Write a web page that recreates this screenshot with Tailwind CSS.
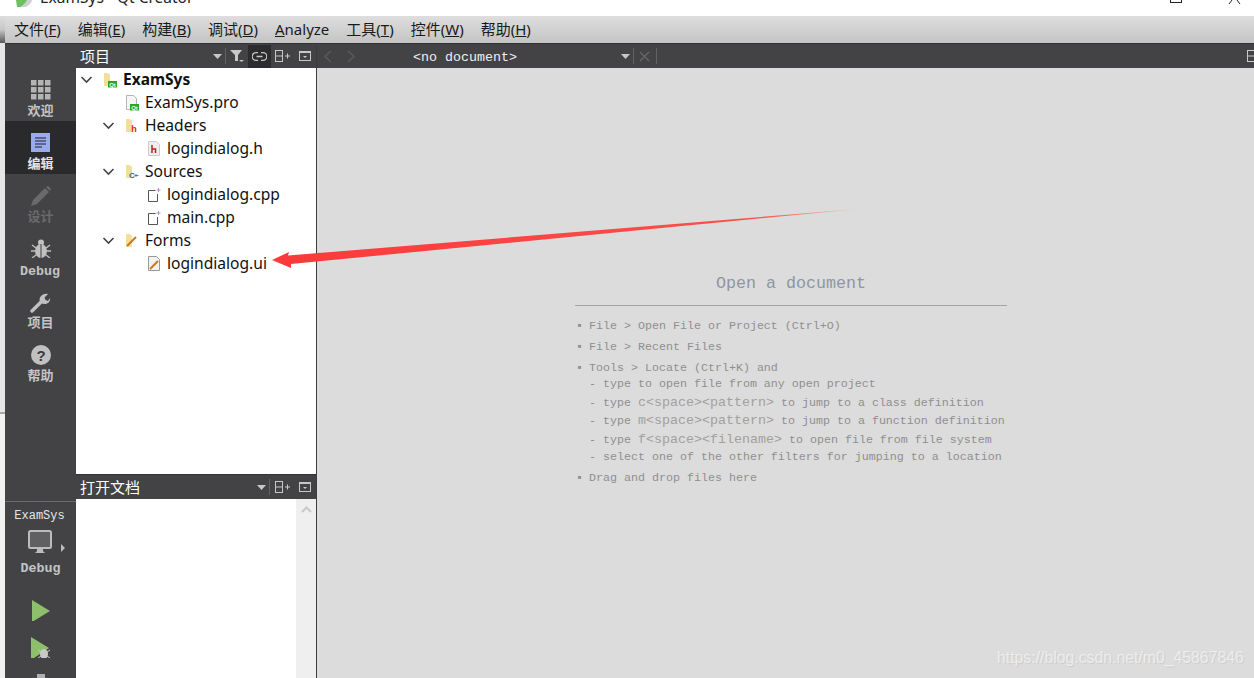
<!doctype html>
<html><head><meta charset="utf-8"><script src="https://cdn.jsdelivr.net/npm/@tailwindcss/browser@4"></script></head>
<body class="m-0 bg-white">
<div class="relative w-[1254px] h-[678px] overflow-hidden flex flex-col font-['Noto_Sans','Noto_Sans_CJK_SC',sans-serif] bg-[#dcdcdc]">

<!-- title bar -->
<div class="h-4 bg-white relative overflow-hidden shrink-0">
  <div class="absolute left-[40px] top-[-13px] text-[15.5px] leading-[20px] text-[#222] whitespace-pre">ExamSys - Qt Creator</div>
  <svg class="absolute left-[15px] top-0" width="18" height="8"><path d="M1 0h11v2L6 7H2z" fill="#6fbf5e"/><path d="M12 0h5l-1 3-5 4-4 0z" fill="#cfcfcf"/></svg>
  <div class="absolute left-[1170px] top-[-8px] w-3 h-[11px] border border-[#222]"></div>
  <svg class="absolute left-[1228px] top-0" width="14" height="5"><path d="M1 4L4 0M12 4L9 0" stroke="#222"/></svg>
</div>

<!-- menu -->
<div class="h-[27px] shrink-0 flex">
  <div class="w-[5px] bg-gradient-to-b from-[#dcdcdc] via-[#c8c8c8] to-[#5a5a5a]"></div>
  <div class="flex-1 bg-gradient-to-b from-[#dedede] to-[#c4c4c4] flex items-center pl-[9px] gap-[17px] text-[15px] text-[#1a1a1a] leading-none">
    <span>文件(<u>F</u>)</span><span>编辑(<u>E</u>)</span><span>构建(<u>B</u>)</span><span>调试(<u>D</u>)</span><span><u>A</u>nalyze</span><span>工具(<u>T</u>)</span><span>控件(<u>W</u>)</span><span>帮助(<u>H</u>)</span>
  </div>
</div>

<div class="flex-1 flex min-h-0">
  <!-- left edge -->
  <div class="w-[5px] shrink-0 flex flex-col">
    <div class="h-[369px] bg-[#e6e6e6]"></div>
    <div class="h-[2px] bg-[#a8a8a8]"></div>
    <div class="flex-1 bg-[#f1f1f1]"></div>
  </div>

  <!-- mode bar -->
  <div class="w-[71px] shrink-0 flex flex-col bg-[#434345]">
    <div class="h-[25px] bg-[#434345] border-t border-[#333]"></div>
    <div class="flex flex-col text-[13px] font-bold text-[#c4c4c4] leading-none">
      <div class="h-[53px] flex flex-col items-center pt-[12px]">
        <svg width="20" height="20" fill="#b4b4b4"><rect width="5.500" height="5.500"/><rect x="7" width="5.500" height="5.500"/><rect x="14" width="5.500" height="5.500"/><rect y="7" width="5.500" height="5.500"/><rect x="7" y="7" width="5.500" height="5.500"/><rect x="14" y="7" width="5.500" height="5.500"/><rect y="14" width="5.500" height="5.500"/><rect x="7" y="14" width="5.500" height="5.500"/><rect x="14" y="14" width="5.500" height="5.500"/></svg>
        <span class="mt-[4px]">欢迎</span>
      </div>
      <div class="h-[53px] flex flex-col items-center pt-[12px] bg-[#2a2a2c] text-[#e4e4e4]">
        <svg width="19" height="19"><rect width="19" height="19" fill="#9aaaee"/><path d="M4 5h11M4 8h11M4 11h11M4 14h7" stroke="#222" stroke-width="1.200"/></svg>
        <span class="mt-[5px]">编辑</span>
      </div>
      <div class="h-[53px] flex flex-col items-center pt-[12px] text-[#6a6a6c]">
        <svg width="20" height="20" fill="#6a6a6c"><path d="M0 20l2-6L14 2l4 4L6 18z"/><path d="M15 1l2-1 3 3-1 2z"/></svg>
        <span class="mt-[4px]">设计</span>
      </div>
      <div class="h-[53px] flex flex-col items-center pt-[12px]">
        <svg width="20" height="19" fill="#c0c0c0"><ellipse cx="10" cy="12" rx="6" ry="7"/><circle cx="10" cy="3.500" r="3"/><path d="M1 6l4 3M19 6l-4 3M0 12h4M20 12h-4M1 19l4-3M19 19l-4-3" stroke="#c0c0c0" stroke-width="1.300"/><path d="M10 5v14" stroke="#434345"/></svg>
        <span class="mt-[7px] text-[13.33px] font-['Liberation_Mono',monospace] mr-[1px]">Debug</span>
      </div>
      <div class="h-[53px] flex flex-col items-center pt-[13px]">
        <svg width="21" height="20" fill="none"><path d="M2 18L11 9" stroke="#c0c0c0" stroke-width="3.400" stroke-linecap="round"/><path d="M10 9C8 3 14 0 18 1l-3.500 3.500 1 2.500 2.500 1L20 5c1 4-4 8-9 5z" fill="#c0c0c0"/></svg>
        <span class="mt-[3px]">项目</span>
      </div>
      <div class="h-[53px] flex flex-col items-center pt-[12px]">
        <svg width="20" height="20"><circle cx="10" cy="10" r="10" fill="#c0c0c0"/><text x="10" y="15.500" text-anchor="middle" font-size="15" font-weight="700" fill="#3a3a3c" font-family="Liberation Sans">?</text></svg>
        <span class="mt-[4px]">帮助</span>
      </div>
    </div>
    <div class="flex-1"></div>
    <div class="h-[177px] border-t border-[#6a6a6a] flex flex-col items-center shrink-0 relative overflow-hidden">
      <span class="mt-[8px] text-[12px] leading-[13px] text-[#e6e6e6] font-['Liberation_Mono',monospace] mr-[2px]">ExamSys</span>
      <svg class="mt-[7px] mr-[1px]" width="26" height="25"><rect x="2" y="1" width="22" height="17" rx="1.500" fill="#606062" stroke="#bcbcbc" stroke-width="2"/><path d="M10.500 18h5l1 4 4 2H5.500l4-2z" fill="#bcbcbc"/></svg>
      <svg class="absolute left-[56px] top-[42px]" width="5" height="8"><path d="M0 0l4 4-4 4z" fill="#bcbcbc"/></svg>
      <span class="mt-[9px] text-[13.33px] font-bold leading-[14px] text-[#c4c4c4] font-['Liberation_Mono',monospace]">Debug</span>
      <svg class="mt-[24px]" width="18" height="22"><path d="M0 0l18 11L0 22z" fill="#8dbf6c"/></svg>
      <svg class="mt-[16px]" width="20" height="23"><path d="M0 0l18 11L0 23z" fill="#8dbf6c"/><ellipse cx="13" cy="17" rx="4" ry="5" fill="#c8c8c8"/><path d="M7 13l3 2M19 13l-3 2M7 21l3-2M19 21l-3-2" stroke="#c8c8c8"/></svg>
      <div class="mt-[16px] w-2 h-1 bg-[#b0b0b0]"></div>
    </div>
  </div>

  <!-- side panel -->
  <div class="w-[241px] shrink-0 flex flex-col border-r border-[#3c3c3e]">
    <div class="h-[25px] bg-[#434345] border-t border-[#333] flex items-center pl-[4px] text-[15px] text-white shrink-0 relative">
      <span>项目</span>
      <svg class="ml-auto mr-[3px]" width="9" height="5"><path d="M0 0h9L4.500 5z" fill="#c8c8c8"/></svg>
      <div class="w-px h-[16px] bg-[#626264]"></div>
      <svg class="ml-[4px]" width="14" height="12"><path d="M0 0h12L8 5v6H5V5z" fill="#c8c8c8"/><path d="M9 10h5l-2.500 2z" fill="#c8c8c8"/></svg>
      <div class="ml-[4px] w-[23px] h-[23px] bg-[#2c2c2e] flex items-center justify-center"><svg width="15" height="9" fill="none" stroke="#c4c4c4" stroke-width="1.300"><path d="M6 .7H4a3.800 3.800 0 000 7.600h2M9 .7h2a3.800 3.800 0 010 7.600H9M4.500 4.500h6"/></svg></div>
      <svg class="ml-[4px]" width="16" height="12" fill="none" stroke="#c8c8c8"><rect x=".5" y=".5" width="7" height="11"/><path d="M.5 6h7M10 6h5M12.500 3.500v5"/></svg>
      <svg class="ml-[8px] mr-[5px]" width="12" height="10"><rect x=".5" y=".5" width="11" height="9" fill="none" stroke="#c8c8c8"/><rect width="12" height="2" fill="#c8c8c8"/><path d="M4 5h4L6 7z" fill="#c8c8c8"/></svg>
    </div>

    <div class="h-[406px] bg-white text-[15.6px] leading-[23px] text-[#111] overflow-hidden shrink-0">
      <div class="h-[23px] flex items-center pl-[4px] font-bold text-[15.5px]">
        <svg width="13" height="8" fill="none" stroke="#444" stroke-width="1.600"><path d="M1.500 1L6.500 6l5-5"/></svg>
        <svg class="ml-[10px]" width="15" height="16"><path d="M1 1h4l2 2v11H1z" fill="#f3df9c"/><rect x="5" y="9" width="9" height="6.500" fill="#2da52d"/><text x="9.500" y="14.500" text-anchor="middle" font-size="6" font-weight="700" fill="#e8ffe8" font-family="Liberation Sans">Qt</text></svg>
        <span class="ml-[5px]">ExamSys</span>
      </div>
      <div class="h-[23px] flex items-center pl-[49px]">
        <svg width="14" height="16"><path d="M1.500 .5h7l3 3v11h-10z" fill="#f6f6f6" stroke="#b4b4b4"/><rect x="5" y="9" width="9" height="6.500" fill="#2da52d"/><text x="9.500" y="14.500" text-anchor="middle" font-size="6" font-weight="700" fill="#e8ffe8" font-family="Liberation Sans">Qt</text></svg>
        <span class="ml-[6px]">ExamSys.pro</span>
      </div>
      <div class="h-[23px] flex items-center pl-[26px]">
        <svg width="13" height="8" fill="none" stroke="#444" stroke-width="1.600"><path d="M1.500 1L6.500 6l5-5"/></svg>
        <svg class="ml-[9px]" width="15" height="15"><path d="M2 1h4l2 2v11H2z" fill="#f3df9c"/><text x="10" y="14" text-anchor="middle" font-size="9" font-weight="700" fill="#d22" font-family="Liberation Sans">h</text></svg>
        <span class="ml-[6px]">Headers</span>
      </div>
      <div class="h-[23px] flex items-center pl-[71px]">
        <svg width="14" height="16"><path d="M1.500 .5h8l3 3v11h-11z" fill="#eee" stroke="#ccc"/><path d="M5 4v8M5 8h3.500v4" stroke="#b22" stroke-width="1.500" fill="none"/></svg>
        <span class="ml-[6px]">logindialog.h</span>
      </div>
      <div class="h-[23px] flex items-center pl-[26px]">
        <svg width="13" height="8" fill="none" stroke="#444" stroke-width="1.600"><path d="M1.500 1L6.500 6l5-5"/></svg>
        <svg class="ml-[9px]" width="15" height="15"><path d="M2 1h4l2 2v11H2z" fill="#f3df9c"/><text x="5" y="14" font-size="8" font-weight="700" fill="#35648f" font-family="Liberation Sans">C</text><path d="M10.500 11.500h4M12 10v3" stroke="#35648f" stroke-width=".8"/></svg>
        <span class="ml-[6px]">Sources</span>
      </div>
      <div class="h-[23px] flex items-center pl-[71px]">
        <svg width="14" height="16" fill="none"><path d="M8.500 3.500h-7v11h9V7" stroke="#555"/><path d="M11.500 1v4M9.500 3h4" stroke="#b98fcf"/></svg>
        <span class="ml-[6px]">logindialog.cpp</span>
      </div>
      <div class="h-[23px] flex items-center pl-[71px]">
        <svg width="14" height="16" fill="none"><path d="M8.500 3.500h-7v11h9V7" stroke="#555"/><path d="M11.500 1v4M9.500 3h4" stroke="#b98fcf"/></svg>
        <span class="ml-[6px]">main.cpp</span>
      </div>
      <div class="h-[23px] flex items-center pl-[26px]">
        <svg width="13" height="8" fill="none" stroke="#444" stroke-width="1.600"><path d="M1.500 1L6.500 6l5-5"/></svg>
        <svg class="ml-[9px]" width="15" height="15"><path d="M2 1h4l2 2v11H2z" fill="#f3df9c"/><path d="M3 13l9-9" stroke="#c87a18" stroke-width="2"/></svg>
        <span class="ml-[6px]">Forms</span>
      </div>
      <div class="h-[23px] flex items-center pl-[71px]">
        <svg width="14" height="16"><path d="M1.500 .5h8l3 3v11h-11z" fill="#f2f2f2" stroke="#999"/><path d="M3 13l8-8" stroke="#c87a18" stroke-width="2"/></svg>
        <span class="ml-[6px]">logindialog.ui</span>
      </div>
    </div>

    <div class="h-[25px] bg-[#434345] border-t border-[#333] flex items-center pl-[4px] text-[15px] text-white shrink-0">
      <span>打开文档</span>
      <svg class="ml-auto mr-[3px]" width="9" height="5"><path d="M0 0h9L4.500 5z" fill="#c8c8c8"/></svg>
      <div class="w-px h-[16px] bg-[#626264]"></div>
      <svg class="ml-[5px]" width="16" height="12" fill="none" stroke="#c8c8c8"><rect x=".5" y=".5" width="7" height="11"/><path d="M.5 6h7M10 6h5M12.500 3.500v5"/></svg>
      <svg class="ml-[8px] mr-[5px]" width="12" height="10"><rect x=".5" y=".5" width="11" height="9" fill="none" stroke="#c8c8c8"/><rect width="12" height="2" fill="#c8c8c8"/><path d="M4 5h4L6 7z" fill="#c8c8c8"/></svg>
    </div>
    <div class="flex-1 bg-white flex justify-end">
      <div class="w-[20px] bg-[#efefef] flex justify-center pt-[7px]"><svg width="11" height="7" fill="none" stroke="#c8c8c8" stroke-width="2"><path d="M1 6l4.500-4.500L10 6"/></svg></div>
    </div>
  </div>

  <!-- editor -->
  <div class="flex-1 flex flex-col min-w-0 overflow-hidden">
    <div class="h-[25px] bg-[#434345] border-t border-[#333] flex items-center shrink-0 relative font-['Liberation_Mono',monospace] text-[13.33px] text-[#f0f0f0]">
      <svg class="ml-[7px] shrink-0" width="8" height="13" fill="none" stroke="#5c5c5e" stroke-width="1.300"><path d="M7 1L1 6.500 7 12"/></svg>
      <svg class="ml-[15px] shrink-0" width="8" height="13" fill="none" stroke="#5c5c5e" stroke-width="1.300"><path d="M1 1l6 5.500L1 12"/></svg>
      <span class="ml-[58px] mt-[3px] w-[104px] shrink-0">&lt;no document&gt;</span>
      <svg class="ml-[104px] shrink-0" width="9" height="5"><path d="M0 0h9L4.500 5z" fill="#c8c8c8"/></svg>
      <div class="ml-[3px] w-px h-[16px] bg-[#626264] shrink-0"></div>
      <svg class="ml-[5px] shrink-0" width="11" height="11" fill="none" stroke="#68686a" stroke-width="1.200"><path d="M1 1l9 9M10 1l-9 9"/></svg>
      <div class="ml-[6px] w-px h-[16px] bg-[#626264] shrink-0"></div>
      <svg class="ml-auto mr-[-9px] shrink-0" width="16" height="12" fill="none" stroke="#c8c8c8"><rect x=".5" y=".5" width="7" height="11"/><path d="M.5 6h7"/></svg>
    </div>
    <div class="flex-1 bg-[#dcdcdc] flex font-['Liberation_Mono',monospace] text-[11.67px] text-[#8f8f8f]">
      <div class="w-[432px] ml-[258px] flex flex-col mt-[203px]">
        <div class="text-center text-[16.67px] leading-[26px] text-[#8d96a2] pb-[8px] border-b border-[#a4a4a4]">Open a document</div>
        <div class="mt-[12px] leading-[17px] whitespace-nowrap">
          <div class="flex"><span class="w-[14px] pl-[1px]">▪</span><span class="whitespace-pre">File &gt; Open File or Project (Ctrl+O)</span></div>
          <div class="flex mt-[4px]"><span class="w-[14px] pl-[1px]">▪</span><span class="whitespace-pre">File &gt; Recent Files</span></div>
          <div class="flex mt-[4px]"><span class="w-[14px] pl-[1px]">▪</span><span class="whitespace-pre">Tools &gt; Locate (Ctrl+K) and</span></div>
          <div class="pl-[14px] leading-[17.5px] -mt-[1px]">
            <div>- type to open file from any open project</div>
            <div>- type <span class="text-[13.33px] text-[#a3a09d]">c&lt;space&gt;&lt;pattern&gt;</span> to jump to a class definition</div>
            <div>- type <span class="text-[13.33px] text-[#a3a09d]">m&lt;space&gt;&lt;pattern&gt;</span> to jump to a function definition</div>
            <div>- type <span class="text-[13.33px] text-[#a3a09d]">f&lt;space&gt;&lt;filename&gt;</span> to open file from file system</div>
            <div>- select one of the other filters for jumping to a location</div>
          </div>
          <div class="flex mt-[3px]"><span class="w-[14px] pl-[1px]">▪</span><span class="whitespace-pre">Drag and drop files here</span></div>
        </div>
      </div>
    </div>
  </div>
</div>

<!-- arrow annotation -->
<svg class="absolute left-0 top-0 pointer-events-none" width="1254" height="678"><defs><linearGradient id="a" x1="290" y1="0" x2="860" y2="0" gradientUnits="userSpaceOnUse"><stop offset="0" stop-color="#fb3a3a"/><stop offset=".8" stop-color="#f8504c"/><stop offset="1" stop-color="#f0b0a0"/></linearGradient></defs><path d="M272 260L289 252 288 255.500 858 209 291 264 291 268z" fill="url(#a)"/></svg>

<!-- watermark -->
<div class="absolute left-[997px] top-[648px] text-[15.8px] leading-[20px] text-white/55 [text-shadow:1px_1px_1px_rgba(0,0,0,0.08)] font-['Liberation_Sans',sans-serif] whitespace-nowrap">https://blog.csdn.net/m0_45867846</div>
</div>
</body></html>
